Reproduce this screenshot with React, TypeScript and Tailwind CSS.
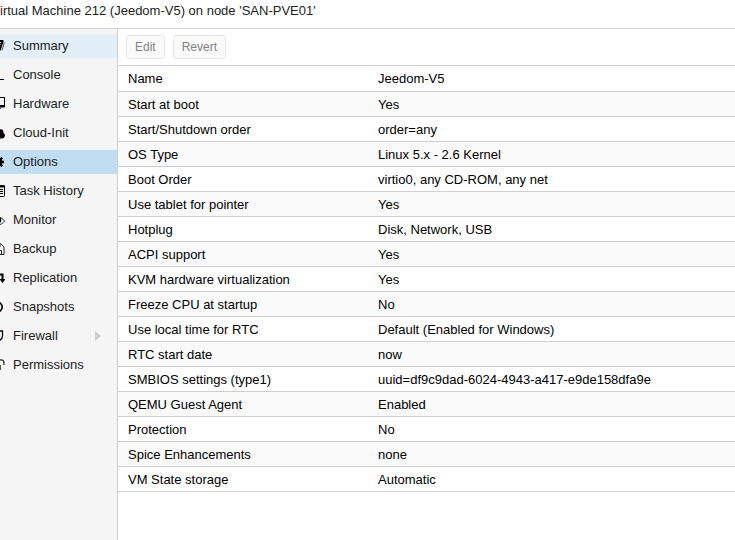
import type { ReactNode } from "react";

interface iMenuItem {
  label: string;
  icon: ReactNode;
  state?: "hover" | "active";
  hasChildren?: boolean;
}

// 16x16 glyphs, black on the tree background
const Glyph = ({ children }: { children: ReactNode }) => (
  <svg
    viewBox="0 0 16 16"
    className="size-4 shrink-0"
    fill="none"
    stroke="black"
    aria-hidden="true"
  >
    {children}
  </svg>
);

const menu: iMenuItem[] = [
  {
    label: "Summary",
    state: "hover",
    icon: (
      <Glyph>
        <path
          d="M5 2h8.500c.9 0 1.300.6 1 1.500l-2.500 8c-.2.800-.8 1.300-1.700 1.300H3c-1.200 0-2-.7-1.700-1.700L4 3c.2-.7.500-1 1-1z"
          fill="black"
          stroke="none"
        />
        <path d="M6 4.500h6M5.500 6.500h6" stroke="white" />
        <path d="M15.400 4l-2.400 8.500" stroke="#555" />
      </Glyph>
    ),
  },
  {
    label: "Console",
    icon: (
      <Glyph>
        <path d="M2 4l4 4-4 4" strokeWidth="1.5" />
        <path d="M7 12.500h8" />
      </Glyph>
    ),
  },
  {
    label: "Hardware",
    icon: (
      <Glyph>
        <path
          d="M2 1h13c.6 0 1 .4 1 1v8.500c0 .6-.4 1-1 1H2c-.6 0-1-.4-1-1V2c0-.6.400-1 1-1zM2 2v7h13V2z"
          fill="black"
          fillRule="evenodd"
          stroke="none"
        />
        <path d="M6 12.500h6" stroke="#444" />
      </Glyph>
    ),
  },
  {
    label: "Cloud-Init",
    icon: (
      <Glyph>
        <path
          d="M4 13.500a4 4 0 0 1-1.300-7.600A4.600 4.600 0 0 1 11.300 4.500a2.400 2.400 0 0 1 2.900 3.300 3 3 0 0 1-.9 5.700z"
          fill="black"
          stroke="none"
        />
      </Glyph>
    ),
  },
  {
    label: "Options",
    state: "active",
    icon: (
      <Glyph>
        <circle cx="9" cy="8" r="3.200" strokeWidth="2.600" />
        <path
          d="M9 2v2.500M9 11.500V14M3 8h2.500M12.500 8H15M4.800 3.800l1.700 1.700M11.500 10.500l1.700 1.700M4.800 12.200l1.700-1.700M11.500 5.500l1.700-1.700"
          strokeWidth="2.300"
        />
      </Glyph>
    ),
  },
  {
    label: "Task History",
    icon: (
      <Glyph>
        <rect x="1.500" y="2.500" width="14" height="11" rx="1" />
        <path d="M1 3.500h15" strokeWidth="2" />
        <path d="M3 6.500h1.500M6 6.500h8M3 8.500h1.500M6 8.500h8M3 10.500h1.500M6 10.500h8" />
      </Glyph>
    ),
  },
  {
    label: "Monitor",
    icon: (
      <Glyph>
        <path d="M1.500 9c3.500-5.300 10.500-5.300 14 0-3.500 5.300-10.500 5.300-14 0z" stroke="#333" />
        <circle cx="9" cy="8" r="3.300" fill="black" stroke="none" />
      </Glyph>
    ),
  },
  {
    label: "Backup",
    icon: (
      <Glyph>
        <path d="M3.500 2.500h8l3.500 3.500v7.500H3.500zM6 13.500v-4h6.500v4M6 2.500v3.500h5V2.500" stroke="#222" />
      </Glyph>
    ),
  },
  {
    label: "Replication",
    icon: (
      <Glyph>
        <path d="M7 4.500h6.500V10M10 12H3.500V6" strokeWidth="2" />
        <path d="M10.500 9h6l-3 4zM.5 7h6l-3-4z" fill="black" stroke="none" />
      </Glyph>
    ),
  },
  {
    label: "Snapshots",
    icon: (
      <Glyph>
        <path d="M5 4.900a4.700 4.700 0 1 1-.3 5.900" strokeWidth="1.700" />
        <path d="M3 2.500v4.500h4.500z" fill="black" stroke="none" />
      </Glyph>
    ),
  },
  {
    label: "Firewall",
    hasChildren: true,
    icon: (
      <Glyph>
        <path d="M3.500 3h10v5c0 2.600-2.200 4.300-5 5.500-2.800-1.200-5-2.900-5-5.500z" strokeWidth="1.300" />
      </Glyph>
    ),
  },
  {
    label: "Permissions",
    icon: (
      <Glyph>
        <rect x="3" y="8" width="9" height="5" fill="#555" stroke="none" />
        <path d="M9.500 8V5.500a2.700 2.700 0 0 1 5.400 0V8" stroke="#333" strokeWidth="1.300" />
      </Glyph>
    ),
  },
];

const options = [
  ["Name", "Jeedom-V5"],
  ["Start at boot", "Yes"],
  ["Start/Shutdown order", "order=any"],
  ["OS Type", "Linux 5.x - 2.6 Kernel"],
  ["Boot Order", "virtio0, any CD-ROM, any net"],
  ["Use tablet for pointer", "Yes"],
  ["Hotplug", "Disk, Network, USB"],
  ["ACPI support", "Yes"],
  ["KVM hardware virtualization", "Yes"],
  ["Freeze CPU at startup", "No"],
  ["Use local time for RTC", "Default (Enabled for Windows)"],
  ["RTC start date", "now"],
  ["SMBIOS settings (type1)", "uuid=df9c9dad-6024-4943-a417-e9de158dfa9e"],
  ["QEMU Guest Agent", "Enabled"],
  ["Protection", "No"],
  ["Spice Enhancements", "none"],
  ["VM State storage", "Automatic"],
];

const rowColors = {
  hover: "bg-[#e2eff8]",
  active: "bg-[#c1ddf1]",
};

const Sidebar = () => (
  <nav className="w-[118px] shrink-0 overflow-hidden border-r border-[#cfcfcf] bg-[#f5f5f5] pt-[5px]">
    <ul>
      {menu.map(({ label, icon, state, hasChildren }) => (
        <li key={label} className="h-[29px]">
          <a
            href="#"
            className={`flex h-6 items-center text-[#222] ${state ? rowColors[state] : ""}`}
          >
            <span className="-ml-[11px] mr-2 flex">{icon}</span>
            {label}
            {hasChildren && (
              <svg viewBox="0 0 6 10" className="ml-auto mr-4 h-[10px] w-[6px]" aria-hidden="true">
                <path d="M0 0l6 5-6 5z" fill="#cfcfcf" />
              </svg>
            )}
          </a>
        </li>
      ))}
    </ul>
  </nav>
);

const Toolbar = () => (
  <div className="flex h-9 items-center gap-2 px-2">
    <button
      type="button"
      disabled
      className="h-6 rounded-[3px] border border-[#e8e8e8] bg-[#fafafa] px-2 text-xs text-[#828282]"
    >
      Edit
    </button>
    <button
      type="button"
      disabled
      className="h-6 rounded-[3px] border border-[#e8e8e8] bg-[#fafafa] px-2 text-xs text-[#828282]"
    >
      Revert
    </button>
  </div>
);

const OptionsTable = () => (
  <table className="w-full table-fixed border-collapse border-y border-[#cfcfcf] text-black">
    <tbody>
      {options.map(([name, value]) => (
        <tr
          key={name}
          className="h-[25px] border-b border-[#cfcfcf] first:h-[26px] even:bg-[#fafafa]"
        >
          <th scope="row" className="w-[250px] px-[10px] pt-px text-left font-normal">
            {name}
          </th>
          <td className="px-[10px] pt-px">{value}</td>
        </tr>
      ))}
    </tbody>
  </table>
);

const App = () => {
  return (
    <div className="flex min-h-screen flex-col overflow-hidden bg-white font-['Liberation_Sans',Arial,sans-serif] text-[13px] leading-4">
      <header className="h-[29px] border-b border-[#cfcfcf] pt-[3px] text-[#222]">
        <h1 className="whitespace-nowrap">irtual Machine 212 (Jeedom-V5) on node 'SAN-PVE01'</h1>
      </header>
      <div className="flex grow">
        <Sidebar />
        <main className="min-w-0 grow">
          <Toolbar />
          <OptionsTable />
        </main>
      </div>
    </div>
  );
};

export default App;
